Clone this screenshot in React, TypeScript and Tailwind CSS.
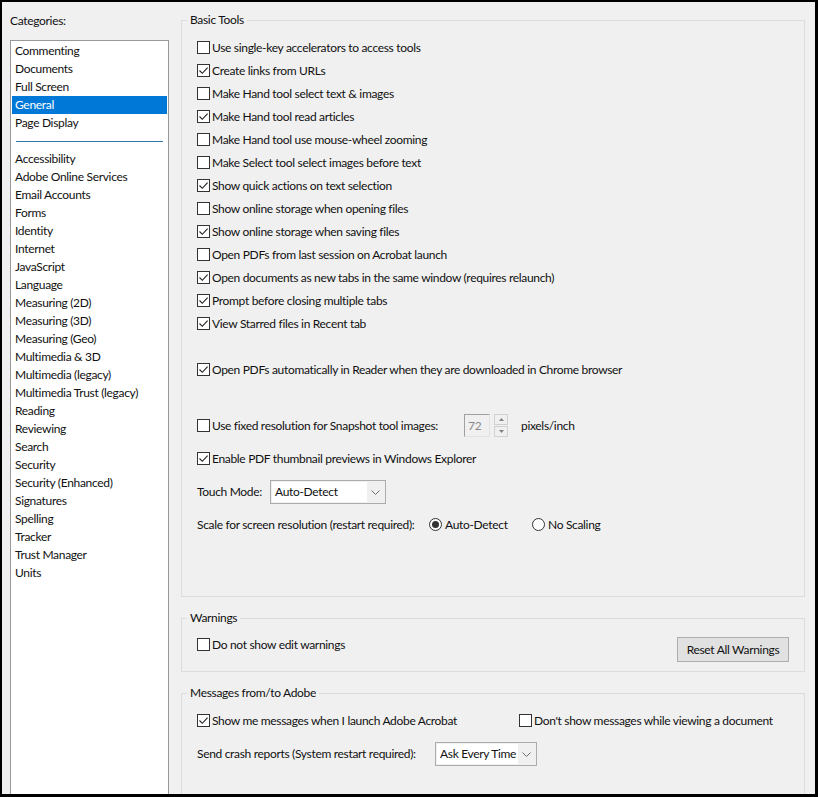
import React from "react";

const categoriesTop = ["Commenting", "Documents", "Full Screen", "General", "Page Display"];
const categoriesBottom = [
  "Accessibility",
  "Adobe Online Services",
  "Email Accounts",
  "Forms",
  "Identity",
  "Internet",
  "JavaScript",
  "Language",
  "Measuring (2D)",
  "Measuring (3D)",
  "Measuring (Geo)",
  "Multimedia & 3D",
  "Multimedia (legacy)",
  "Multimedia Trust (legacy)",
  "Reading",
  "Reviewing",
  "Search",
  "Security",
  "Security (Enhanced)",
  "Signatures",
  "Spelling",
  "Tracker",
  "Trust Manager",
  "Units",
];

const basic: [string, boolean][] = [
  ["Use single-key accelerators to access tools", false],
  ["Create links from URLs", true],
  ["Make Hand tool select text & images", false],
  ["Make Hand tool read articles", true],
  ["Make Hand tool use mouse-wheel zooming", false],
  ["Make Select tool select images before text", false],
  ["Show quick actions on text selection", true],
  ["Show online storage when opening files", false],
  ["Show online storage when saving files", true],
  ["Open PDFs from last session on Acrobat launch", false],
  ["Open documents as new tabs in the same window (requires relaunch)", true],
  ["Prompt before closing multiple tabs", true],
  ["View Starred files in Recent tab", true],
];

function Check({ checked }: { checked: boolean }) {
  return (
    <span className="w-[13px] h-[13px] border border-[#333333] bg-white flex items-center justify-center shrink-0">
      {checked && (
        <svg width="11" height="11" viewBox="0 0 11 11">
          <path d="M1.5 5.5 L4.3 8.3 L9.6 2.6" stroke="#222" strokeWidth="1.1" fill="none" />
        </svg>
      )}
    </span>
  );
}

function CheckRow({ label, checked, className = "" }: { label: string; checked: boolean; className?: string }) {
  return (
    <div className={"flex items-center h-[23px] " + className}>
      <Check checked={checked} />
      <span className="ml-[2px] whitespace-nowrap">{label}</span>
    </div>
  );
}

function Radio({ checked }: { checked: boolean }) {
  return (
    <span className="w-[13px] h-[13px] rounded-full border border-[#333333] bg-white flex items-center justify-center shrink-0">
      {checked && <span className="w-[7px] h-[7px] rounded-full bg-[#333333]" />}
    </span>
  );
}

function Chevron() {
  return (
    <svg width="9" height="5" viewBox="0 0 9 5">
      <path d="M0.5 0.5 L4.5 4.5 L8.5 0.5" stroke="#707070" strokeWidth="1" fill="none" />
    </svg>
  );
}

function Dropdown({ value, width }: { value: string; width: string }) {
  return (
    <div className={"h-[24px] border border-[#acacac] bg-[#f0f0f0] flex items-stretch p-[1px] shrink-0 " + width}>
      <div className="flex-1 bg-white flex items-center pl-[3px] whitespace-nowrap overflow-hidden">{value}</div>
      <div className="w-[17px] flex items-center justify-center">
        <Chevron />
      </div>
    </div>
  );
}

function Group({ title, className = "", children }: { title: string; className?: string; children: React.ReactNode }) {
  return (
    <fieldset className={"border border-[#dcdcdc] min-w-0 shrink-0 " + className}>
      <legend className="ml-[5px] px-[3px] leading-[14px]">{title}</legend>
      {children}
    </fieldset>
  );
}

export default function App() {
  return (
    <div className="w-[818px] h-[797px] bg-black pt-[2px] pl-[2px] pr-[3px] pb-[3px] font-['Lato',_'Open_Sans',_sans-serif] text-[12px] tracking-[-0.32px] text-[#111111]">
      <div className="w-full h-full bg-[#f0f0f0] flex overflow-hidden">
        {/* Left: categories */}
        <div className="pl-[8px] w-[167px] shrink-0 flex flex-col">
          <div className="mt-[11px] h-[15px] leading-[15px]">Categories:</div>
          <div className="mt-[12px] flex-1 border border-b-0 border-[#999999] bg-white pt-[1px] px-[1px]">
            {categoriesTop.map((c) => (
              <div
                key={c}
                className={
                  "h-[18px] leading-[18px] pl-[3px] whitespace-nowrap " +
                  (c === "General" ? "bg-[#0078d7] text-white" : "")
                }
              >
                {c}
              </div>
            ))}
            <div className="h-[18px] flex items-center px-[4px]">
              <div className="w-full h-[1px] bg-[#2f77a8]" />
            </div>
            {categoriesBottom.map((c) => (
              <div key={c} className="h-[18px] leading-[18px] pl-[3px] whitespace-nowrap">
                {c}
              </div>
            ))}
          </div>
        </div>

        {/* Right: settings */}
        <div className="ml-[12px] w-[624px] shrink-0 flex flex-col">
          <Group title="Basic Tools" className="mt-[11px] h-[584px]">
            <div className="pl-[15px] pt-[9px]">
              {basic.map(([label, checked]) => (
                <CheckRow key={label} label={label} checked={checked} />
              ))}
              <CheckRow
                className="mt-[23px]"
                label="Open PDFs automatically in Reader when they are downloaded in Chrome browser"
                checked={true}
              />
              <div className="mt-[33px] flex items-center h-[23px]">
                <div className="w-[267px] flex items-center">
                  <Check checked={false} />
                  <span className="ml-[2px] whitespace-nowrap">Use fixed resolution for Snapshot tool images:</span>
                </div>
                <div className="w-[26px] h-[23px] border border-[#a0a0a0] border-r-[#e3e3e3] border-b-[#e3e3e3] bg-[#f0f0f0] text-[#8a8a8a] flex items-center pl-[3px]">
                  72
                </div>
                <div className="ml-[4px] w-[14px] h-[23px] flex flex-col justify-between">
                  <div className="h-[11px] border border-[#d0d0d0] flex items-center justify-center">
                    <svg width="5" height="3" viewBox="0 0 5 3">
                      <path d="M0 3 L2.5 0 L5 3 Z" fill="#808080" />
                    </svg>
                  </div>
                  <div className="h-[11px] border border-[#d0d0d0] flex items-center justify-center">
                    <svg width="5" height="3" viewBox="0 0 5 3">
                      <path d="M0 0 L2.5 3 L5 0 Z" fill="#808080" />
                    </svg>
                  </div>
                </div>
                <span className="ml-[13px]">pixels/inch</span>
              </div>
              <CheckRow className="mt-[10px]" label="Enable PDF thumbnail previews in Windows Explorer" checked={true} />
              <div className="mt-[10px] flex items-center">
                <span className="w-[73px]">Touch Mode:</span>
                <Dropdown value="Auto-Detect" width="w-[116px]" />
              </div>
              <div className="mt-[9px] flex items-center h-[23px]">
                <span className="w-[232px] whitespace-nowrap">Scale for screen resolution (restart required):</span>
                <div className="w-[103px] flex items-center">
                  <Radio checked={true} />
                  <span className="ml-[3px]">Auto-Detect</span>
                </div>
                <div className="flex items-center">
                  <Radio checked={false} />
                  <span className="ml-[3px]">No Scaling</span>
                </div>
              </div>
            </div>
          </Group>

          <Group title="Warnings" className="mt-[14px] h-[61px]">
            <div className="pl-[15px] pr-[15px] pt-[8px] flex justify-between items-start">
              <CheckRow label="Do not show edit warnings" checked={false} />
              <div className="mt-[4px] w-[112px] h-[25px] border border-[#adadad] bg-[#e1e1e1] flex items-center justify-center whitespace-nowrap">
                Reset All Warnings
              </div>
            </div>
          </Group>

          <Group title="Messages from/to Adobe" className="mt-[14px] h-[140px]">
            <div className="pl-[15px] pt-[9px]">
              <div className="flex items-center">
                <CheckRow className="w-[322px]" label="Show me messages when I launch Adobe Acrobat" checked={true} />
                <CheckRow label="Don't show messages while viewing a document" checked={false} />
              </div>
              <div className="mt-[10px] flex items-center">
                <span className="w-[238px] whitespace-nowrap">Send crash reports (System restart required):</span>
                <Dropdown value="Ask Every Time" width="w-[102px]" />
              </div>
            </div>
          </Group>
        </div>
      </div>
    </div>
  );
}
